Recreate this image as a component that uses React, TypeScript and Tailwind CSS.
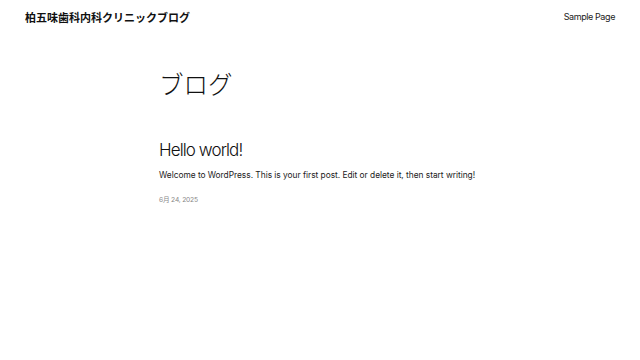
export default function App() {
  return (
    <div className="min-h-[360px] w-[640px] bg-white text-[#111] [font-family:Inter,'Noto_Sans_CJK_JP',sans-serif]">
      {/* Header */}
      <header className="flex items-center justify-between px-[25px] pt-[10px]">
        <div className="text-[11px] font-semibold leading-[14px] [font-family:'Noto_Sans_CJK_JP',sans-serif]">
          柏五味歯科内科クリニックブログ
        </div>
        <nav className="text-[9px] leading-[14px] tracking-[-0.4px] text-[#222]">Sample Page</nav>
      </header>

      {/* Main */}
      <main className="mx-auto w-[322px] pt-[44px]">
        <h1 className="text-[24.5px] font-light leading-[32px] [font-family:'Noto_Sans_CJK_JP',sans-serif]">ブログ</h1>

        <article className="pt-[39px]">
          <h2 className="text-[17px] font-light leading-[22px] tracking-[-0.9px]">Hello world!</h2>
          <p className="pt-[8px] text-[8.4px] leading-[12px] tracking-[-0.03px] text-[#222]">
            Welcome to WordPress. This is your first post. Edit or delete it, then start writing!
          </p>
          <div className="pt-[14px] text-[6.7px] leading-[10px] tracking-[-0.2px] text-[#888]">
            6月 24, 2025
          </div>
        </article>
      </main>
    </div>
  )
}
